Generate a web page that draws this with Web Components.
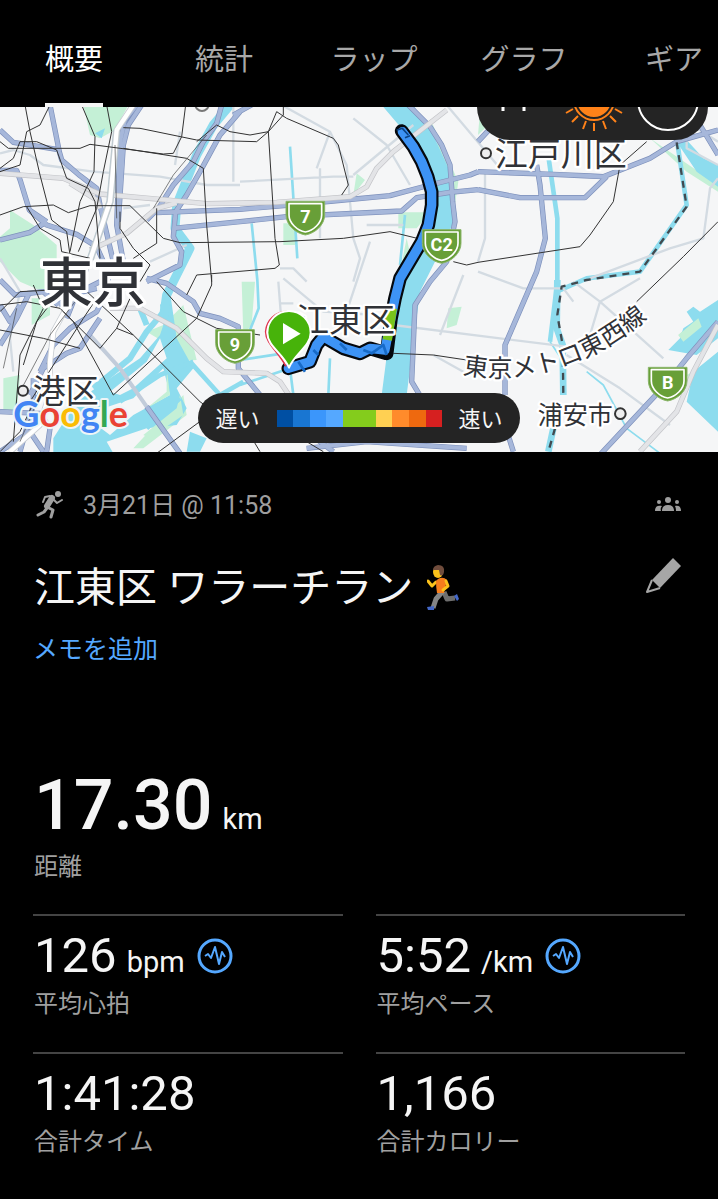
<!DOCTYPE html>
<html lang="ja">
  <head>
    <meta charset="utf-8">
    <meta name="viewport" content="width=device-width, initial-scale=1">
    <title>江東区 ワラーチラン</title>
    <style>
      body {
        margin: 0;
        background: #000;
        color: #f5f5f5;
        font-family: Roboto, "Noto Sans CJK JP", sans-serif;
      }
    </style>
  </head>
  <body>
    <activity-page>
      <tab-bar slot="tabs">
        <tab-item selected>概要</tab-item>
        <tab-item>統計</tab-item>
        <tab-item>ラップ</tab-item>
        <tab-item>グラフ</tab-item>
        <tab-item>ギア</tab-item>
      </tab-bar>
      <route-map slot="map">
        <weather-chip slot="weather"></weather-chip>
        <pace-legend slot="legend"></pace-legend>
      </route-map>
      <activity-header>
        <span slot="date">3月21日 @ 11:58</span>
        <span slot="name">江東区 ワラーチラン</span>
        <span slot="memo">メモを追加</span>
      </activity-header>
      <activity-stats>
        <stat-item large unit="km" label="距離">17.30</stat-item>
        <stat-item chart unit="bpm" label="平均心拍">126</stat-item>
        <stat-item chart unit="/km" label="平均ペース">5:52</stat-item>
        <stat-item label="合計タイム">1:41:28</stat-item>
        <stat-item label="合計カロリー">1,166</stat-item>
      </activity-stats>
    </activity-page>

    <template id="activity-page">
      <style>
        :host { display: block; }
        main { padding: 0 33px 40px; }
      </style>
      <slot name="tabs"></slot>
      <slot name="map"></slot>
      <main><slot></slot></main>
    </template>

    <template id="tab-bar">
      <style>
        :host { display: block; overflow: hidden; }
        nav { display: flex; height: 107px; margin-left: -1px; }
      </style>
      <nav><slot></slot></nav>
    </template>

    <template id="tab-item">
      <style>
        :host { display: flex; flex: 0 0 150px; justify-content: center; }
        button {
          box-sizing: border-box;
          height: 100%;
          padding: 17px 0 0;
          border: 0;
          border-bottom: 4px solid transparent;
          background: none;
          color: #a8a8a8;
          font: inherit;
          font-size: 29px;
          line-height: 40px;
        }
        :host([selected]) button { color: #fff; border-color: #f5f5f5; }
      </style>
      <button type="button"><slot></slot></button>
    </template>

    <template id="route-map">
      <style>
        :host { display: block; position: relative; overflow: hidden; background: #f5f6f7; }
        svg { display: block; width: 100%; height: auto; }
        path { fill: none; stroke-linejoin: round; }
        .park path { fill: #c4f0d6; }
        .water path { fill: #8ddcee; }
        .river path { stroke: #8ddcee; }
        .minor path { stroke: #d3dbe2; stroke-width: 7; }
        .case { stroke: #7d90bb; stroke-width: 16; }
        .road { stroke: #a6b7da; stroke-width: 12; }
        .greycase { stroke: #c3c4c8; stroke-width: 16; }
        .grey { stroke: #e3e4e7; stroke-width: 12; }
        .rail path { stroke: #333; stroke-width: 3; }
        .border path { stroke: #414a50; stroke-width: 7; stroke-dasharray: 21 18; }
        .place {
          fill: #303237;
          stroke: #fff;
          stroke-width: 14;
          stroke-linejoin: round;
          paint-order: stroke;
          font-family: "Noto Sans CJK JP", sans-serif;
          font-size: 99px;
        }
        .shield text { fill: #fff; font: 700 54px Roboto, sans-serif; text-anchor: middle; }
        .google { font: 700 108px Lato, sans-serif; stroke: #eef5f7; stroke-width: 12; paint-order: stroke; stroke-linejoin: round; }
        .weather { position: absolute; top: 0; right: 10px; }
        .legend { position: absolute; right: 0; bottom: 9px; left: 0; display: flex; justify-content: center; }
      </style>
      <svg viewBox="0 6 2154 1035" role="img" aria-label="ルート">
        <defs>
          <g id="shield">
            <path d="M-58-46H58V-5C58 24 30 50 0 55C-30 50-58 24-58-5Z" style="fill:#689f38;stroke:#8ab56a;stroke-width:3"/>
            <path d="M-49-39H49V-5C49 19 24 42 0 46C-24 42-49 19-49-5Z" style="stroke:#fff;stroke-width:5"/>
          </g>
          <!-- roads are drawn twice: a dark casing, then the fill -->
          <g id="roads">
            <path d="M0 75L40 112L170 133M150 0L178 140L185 165L240 212L290 250L300 300L340 470M0 196H50L62 230L88 315L140 360L230 388L290 425L310 470M0 405L90 382L140 350M88 315L140 350"/>
            <path d="M410 0L375 45L360 110L350 360L370 470M425 0L385 60L370 120L355 350"/>
            <path d="M720 20L660 90L600 200L560 270L527 320L520 395L545 440L540 480L440 530M665 0L650 55L610 110L580 170L520 240L475 310L440 345"/>
            <path d="M0 525L45 570L130 560L175 600M0 720L50 640L90 560M0 600L30 650L60 600M175 600L210 570L250 560L290 550M120 800L160 720L210 670L290 620L320 560L325 520M90 870L130 790L200 745L240 730L300 640M60 1040L100 900L100 820M0 920L120 925L150 970L140 1040L120 1060M0 1040L90 980L130 1040M240 560L300 530M260 490L200 640"/>
            <path d="M440 520L500 535L580 590L600 625L660 640L715 665V790L780 870M440 905L540 1045"/>
            <path d="M470 323L720 313L870 300L1000 288L1170 272L1290 240L1410 210L1434 200M520 370L720 350L860 335L1205 318L1250 278L1350 262L1434 254"/>
            <path d="M700 30L790 -20M1225 0L1290 65L1325 120L1350 180L1358 290L1365 350L1340 470L1290 530L1245 600L1235 830L1265 880"/>
            <path d="M1434 200L1660 208L1770 213L1810 215L1950 160L2030 110L2154 75M1434 254L1560 278H1755L1820 215M1610 180L1620 240L1636 400L1610 500L1515 720V870M2100 60L2154 150M1434 110L1490 50"/>
            <path d="M1790 1060L2000 835L2060 760L2154 650M1515 960L1540 1040"/>
            <path d="M880 950L960 1010L1000 1040M920 1030L1100 1010L1400 1030"/>
          </g>
          <g id="express">
            <path d="M0 205L190 220L300 267L480 283L620 296L830 292L1050 275L1100 245L1130 190L1180 140L1340 15"/>
            <path d="M210 235L290 285L300 310M270 435L380 385L470 310L530 294"/>
            <path d="M330 610H420L530 670L620 760L670 800L800 805L840 830L870 875"/>
            <path d="M2154 660L2080 800L2030 920L1920 1040"/>
          </g>
        </defs>
        <g class="park">
          <path d="M250 0H385L345 75L300 100L270 90ZM30 315L100 360L170 420V470L200 480L130 560L60 530L0 470V395L30 370ZM95 580H150V630L95 660ZM10 820L60 810L50 920H10ZM550 600L490 660L520 770L590 765ZM440 680L490 660V710ZM550 870L560 930L430 1030L400 1030Z"/>
          <path d="M850 355H885V420H850ZM1070 205L1095 225L1060 270ZM1195 322H1290L1250 370H1195ZM1190 1000L1240 490L1220 400L1200 500ZM725 530H765L755 660L730 690ZM1345 610L1385 605L1370 660L1340 670ZM1290 40L1375 230L1360 330L1340 360L1310 100Z"/>
          <path d="M1950 100L2154 240L2154 260L2060 200ZM2035 690L2100 630L2110 660L2050 710ZM1440 20L1465 60L1434 90ZM2060 810L2154 760V900Z"/>
        </g>
        <g class="water">
          <path d="M285 85L315 70L305 100ZM510 560L530 700L580 790L530 850L560 910L530 960L440 970L320 1010L340 1045H160V1000L230 890L300 840L420 760L480 690L490 660L480 600Z"/>
          <path d="M570 980L620 1000L600 1040H560ZM1145 0H1240L1300 90L1350 200L1370 330L1320 440L1260 560L1220 870L1145 870L1180 600L1260 440L1300 300L1290 200L1230 100Z"/>
          <path d="M2020 95L2090 200L2154 245V180L2110 160L2060 105ZM2005 735L2040 700L2050 670L2080 650L2060 620L2080 605L2100 620L2154 585V700L2090 750ZM2080 800L2154 740V980L2060 890Z"/>
        </g>
        <!-- land between the canals -->
        <g style="stroke:none">
          <path d="M480 700L500 760L400 850L360 870L330 860L440 770ZM490 790L510 870L400 930L330 990L250 930L400 880Z" style="fill:#f5f6f7"/>
        </g>
        <g class="park"><path d="M2035 690L2095 640L2105 665L2050 710ZM500 790L510 870L440 910L500 860ZM540 870L550 930L450 1000L430 990L530 910Z"/></g>
        <g class="river">
          <path stroke-width="27" d="M690 0L640 60L590 150L530 300L525 370L570 430L525 520L500 570L490 640"/>
          <path stroke-width="18" d="M280 850L390 760L440 680L500 610M400 560L440 660"/>
          <path stroke-width="14" d="M360 890L480 810L580 770M570 770L660 870L730 830M440 970L540 880"/>
          <path stroke-width="8" d="M870 125L892 460M755 355L772 525L776 610L740 700M1215 330L1200 480M720 765L850 745M720 840L870 790L880 870M990 760L985 870"/>
          <path stroke-width="14" d="M1646 160L1672 340V530L1650 710M1670 560L1760 520L1920 500L2060 300L2030 100"/>
          <path stroke-width="20" d="M1672 525L1670 670L1688 720L1690 870M1660 970L1645 1040"/>
          <path stroke-width="5" d="M1650 710L1690 770M1760 800L1810 840L1880 970L1980 1045"/>
        </g>
        <g class="minor">
          <path d="M0 145L40 135L90 150L130 180L280 200L480 215L620 240H720M700 0V230M540 80L525 180M370 310L450 300M720 230L1000 215H1060M845 0L990 80L1040 180L1060 400L1080 460L1060 530M960 190V400M1060 210L1240 60M990 80L950 190M1060 40L1160 120L1230 240M1100 360H1210M0 460L60 560L30 700L40 800M450 470L560 420"/>
          <path d="M840 490L880 490L920 530M835 530L845 660M840 595H880M1110 410L1060 560L1030 650M850 520L970 620L1130 630M1180 660L1700 725M1390 510L1320 690M1300 750L1390 800M1434 500L1570 550H1690L1720 590M1770 520L2010 430L2110 400L2130 250L2154 220M1720 530L1800 590L1990 760M1700 750L1860 850L2010 960M1800 590L1770 690M1800 590L1920 520M1980 0L2154 110M2060 50V130L2154 180M1455 200V400L1434 470M1340 0L1500 190"/>
          <path d="M270 690L360 790L440 905" style="stroke:#c2ccda;stroke-width:12"/>
        </g>
        <use class="case" href="#roads"/>
        <use class="road" href="#roads"/>
        <use class="greycase" href="#express"/>
        <use class="grey" href="#express"/>
        <path d="M350 75L330 290L270 465" style="stroke:#b7c8cf;stroke-width:22"/>
        <path d="M400 0L350 75L330 290L270 465L210 590L160 680L150 770V860L120 960L30 1040" style="stroke:#c9ced3;stroke-width:18"/>
        <path d="M400 0L350 75L330 290L270 465L210 590L160 680L150 770V860L120 960L30 1040" style="stroke:#fff;stroke-width:13"/>
        <g class="rail">
          <path d="M75 0L90 80L120 210L155 345L200 380L210 450M0 110L25 130H240L270 118L490 147L520 145L545 95L557 0M0 190L40 160L60 110H110L170 135L200 220L265 250L285 290L300 460M150 0L120 60L80 80L60 180L0 200M245 0L285 95L282 200L240 290L210 440M335 80L310 200L290 310L235 440M320 0L335 80M370 68L420 70L590 105L770 110L805 80M0 330L70 305L160 300L205 323L270 302H390L490 400L540 413L840 410L1030 400L1170 380L1260 402M80 305L120 370L180 405L185 440L270 460M370 130L560 160L610 190L620 360L635 530M470 310V415L400 460M360 320V370L400 430L450 480L420 530M590 110L650 60L690 80L750 90L805 80L850 30V0M805 80L830 20L860 40L1000 100L1015 120L1045 240L1025 270M805 80L825 400L838 480L825 490L590 510L560 570"/>
          <path d="M0 600L80 590L180 610L220 650L340 870L590 640L635 540V510M0 675L130 700L240 730M0 620L60 560L250 550L400 690L600 890L640 920L470 1045M100 540L130 610L60 750L40 1010M190 620L300 730L350 670L390 580M350 670L400 690M470 530L550 620L650 670L780 690M0 1040L60 980L130 830M330 520L250 640L90 890M210 520L110 650L70 780"/>
          <path d="M1180 745L1300 750L1400 765M1360 470L1400 480L1434 472L1740 425L1770 390L1840 290L1860 180L1940 110M1910 590L2050 455L2154 350M2154 0L2180 60M920 1010L970 1040M720 940L780 1040"/>
        </g>
        <g class="rail" style="opacity:.6"><path d="M345 120L350 340M50 610L10 790M240 570L150 690L60 860M620 90L520 210L460 310M130 845L60 1010"/></g>
        <g class="border"><path d="M2030 112L2060 305L1920 500L1760 525L1685 545L1672 630L1688 720L1690 870M1665 970L1645 1040"/></g>
        <circle cx="606" cy="-2" r="20" fill="#f4f4f4" stroke="#777" stroke-width="6"/>

        <path d="M1205 78L1240 125L1265 170L1283 215L1295 260L1295 300L1285 360L1265 410L1200 520L1185 580L1173 640L1160 745L1110 730L1080 745L1030 730L970 695L950 720L930 770L865 790" style="stroke:#05080d;stroke-width:41;stroke-linecap:round"/>
        <path d="M1207 80L1240 125L1265 170L1283 215L1295 260L1295 300L1285 360L1265 410L1200 520L1185 580L1173 640L1155 735L1110 730L1080 745L1030 730L970 695L950 720L930 770L865 790" style="stroke:#3d93f5;stroke-width:28;stroke-linecap:round"/>
        <path d="M1177 610L1162 705" style="stroke:#78c51c;stroke-width:28"/>
        <path d="M1090 735L1115 745L1150 720L1160 750M1020 715L1040 735M895 770L915 800M940 735L955 750" style="stroke:#176ac7;stroke-width:8"/>
        <path d="M1190 76L1207 70L1225 90M1215 98L1230 92" style="stroke:#0c4383;stroke-width:5"/>

        <g class="shield">
          <use href="#shield" x="916" y="335"/><text x="916" y="354">7</text>
          <use href="#shield" x="1325" y="420"/><text x="1325" y="439">C2</text>
          <use href="#shield" x="705" y="720"/><text x="705" y="739">9</text>
          <use href="#shield" x="2003" y="833"/><text x="2003" y="852">B</text>
        </g>
        <g class="place">
          <text x="119" y="592" style="font-size:159px;font-weight:500;stroke-width:18">東京</text>
          <text x="1484" y="182">江戸川区</text>
          <text x="888" y="682">江東区</text>
          <text x="98" y="894">港区</text>
          <text x="1613" y="957" style="font-size:75px">浦安市</text>
          <path id="metro" d="M1388 806C1560 840 1760 800 1960 625" style="stroke:none"/>
          <text style="font-size:75px"><textPath href="#metro">東京メトロ東西線</textPath></text>
        </g>
        <g fill="#eee" stroke="#333" stroke-width="6">
          <circle cx="1458" cy="145" r="15"/>
          <circle cx="69" cy="857" r="15"/>
          <circle cx="1861" cy="926" r="16"/>
        </g>
        <text class="google" x="40" y="965"><tspan fill="#4285f4">G</tspan><tspan fill="#ea4335">o</tspan><tspan fill="#fbbc05">o</tspan><tspan fill="#4285f4">g</tspan><tspan fill="#34a853">l</tspan><tspan fill="#ea4335">e</tspan></text>

        <path d="M858 784C835 740 797 715 797 680A64 64 0 0 1 861 620" style="fill:#fff;stroke:#e0354f;stroke-width:5"/>
        <path d="M867 788C850 745 802 725 802 683A65 65 0 0 1 932 683C932 725 884 745 867 788Z" style="fill:#47b30a;stroke:#fff;stroke-width:6"/>
        <path d="M849 654L902 686L849 718Z" style="fill:#fff"/>
      </svg>
      <div class="weather"><slot name="weather"></slot></div>
      <div class="legend"><slot name="legend"></slot></div>
    </template>

    <template id="weather-chip">
      <style>
        :host { display: block; width: 231px; height: 33px; border-radius: 0 0 33px 33px; background: #242424; }
        svg { display: block; }
      </style>
      <svg width="231" height="33" viewBox="0 0 231 33" fill="none">
        <path d="M26 0V4M47 0V4" stroke="#fff" stroke-width="3"/>
        <circle cx="117" cy="-7" r="21" fill="#ff8219"/>
        <circle cx="117" cy="-7" r="18" stroke="#242424" stroke-width="2"/>
        <path d="M117 16V24M126 14L129 22M109 14L106 22M133 9L139 15M101 9L95 15M138 2L145 6M96 2L89 6" stroke="#ff8219" stroke-width="2"/>
        <circle cx="191" cy="-7" r="30" stroke="#fff" stroke-width="2"/>
      </svg>
    </template>

    <template id="pace-legend">
      <style>
        :host { display: block; }
        div {
          display: flex;
          align-items: center;
          gap: 17px;
          height: 50px;
          padding: 0 17px;
          border-radius: 25px;
          background: #242424;
          font-size: 22px;
        }
        span { padding-top: 3px; line-height: 32px; }
        ul { display: flex; margin: 0; padding: 0; list-style: none; }
        li { width: 33px; height: 17px; }
      </style>
      <div>
        <span>遅い</span>
        <ul>
          <li style="background: linear-gradient(90deg, #004fa3 50%, #1976d2 50%)"></li>
          <li style="background: linear-gradient(90deg, #3b96fb 50%, #55a8ff 50%)"></li>
          <li style="background: #84cc1c"></li>
          <li style="background: linear-gradient(90deg, #ffd052 50%, #ff8b2b 50%)"></li>
          <li style="background: linear-gradient(90deg, #ee690f 50%, #d62020 50%)"></li>
        </ul>
        <span>速い</span>
      </div>
    </template>

    <template id="activity-header">
      <style>
        :host { display: block; padding-top: 34px; }
        .row { display: flex; align-items: center; justify-content: space-between; }
        .date { display: flex; align-items: center; gap: 17px; color: #9e9e9e; font-size: 25px; line-height: 40px; }
        h1 { display: flex; align-items: center; gap: 14px; margin: 0; padding-left: 1px; font-size: 41px; font-weight: 400; line-height: 60px; }
        .title { align-items: flex-start; margin-top: 32px; }
        button { display: block; padding: 0; margin: 0 3px 0 0; border: 0; background: none; }
        svg { display: block; }
        .group { margin-right: 3px; }
        a { display: inline-block; margin-top: 12px; color: #55a8ff; font-size: 25px; line-height: 40px; text-decoration: none; }
      </style>
      <div class="row">
        <div class="date">
          <svg width="33" height="30" viewBox="0 0 33 30" fill="none" stroke="#a0a0a0" stroke-linecap="round" stroke-linejoin="round">
            <circle cx="25" cy="3" r="3" fill="#a0a0a0" stroke="none"/>
            <path d="M19 7L14 15" stroke-width="6"/>
            <path d="M17 5L12 6L10 11M20 8L24 12L29 9" stroke-width="2"/>
            <path d="M14 16L20 19L18 26M14 17L11 21L5 24" stroke-width="3"/>
          </svg>
          <slot name="date"></slot>
        </div>
        <svg class="group" width="27" height="18" viewBox="0 0 27 18" fill="#9e9e9e">
          <circle cx="13" cy="3" r="3"/><circle cx="4" cy="5" r="2"/><circle cx="22" cy="5" r="2"/>
          <path d="M7 14C7 10 9 8 13 8S19 10 19 14ZM0 14C0 10 2 8 7 9Q5 11 6 14ZM26 14C26 10 24 8 20 9Q21 11 21 14Z"/>
        </svg>
      </div>
      <div class="row title">
        <h1>
          <slot name="name"></slot>
          <svg width="34" height="46" viewBox="0 0 34 46" role="img" aria-label="ランナー">
            <path d="M17 27L20 34L28 33" fill="none" stroke="#6e6e6e" stroke-width="5" stroke-linejoin="round"/>
            <path d="M16 26L9 34L6 43" fill="none" stroke="#858585" stroke-width="5" stroke-linejoin="round"/>
            <path d="M27 31L30 29L32 34L30 36ZM0 42L7 41V45H1Z" fill="#4468c8"/>
            <path d="M9 17L5 21L1 16" fill="none" stroke="#fcc21b" stroke-width="3" stroke-linejoin="round" stroke-linecap="round"/>
            <path d="M11 14Q16 11 20 15L17 28H10Q9 22 9 16Z" fill="#f77e1c"/>
            <path d="M19 16L21 21L16 25" fill="none" stroke="#fcc21b" stroke-width="3" stroke-linejoin="round" stroke-linecap="round"/>
            <ellipse cx="11" cy="7" rx="5" ry="6" fill="#fcc21b"/>
            <path d="M6 5Q6 1 11 0Q18 0 17 7Q16 12 13 10L12 5Z" fill="#704c3c"/>
          </svg>
        </h1>
        <button type="button" aria-label="編集">
          <svg width="36" height="36" viewBox="0 0 36 36">
            <path d="M27 0L35 8L14 30L6 22Z" fill="#a6a6a6"/>
            <path d="M6 22L1 34L14 30" fill="none" stroke="#a6a6a6" stroke-width="2" stroke-linejoin="round"/>
          </svg>
        </button>
      </div>
      <a href="#memo"><slot name="memo"></slot></a>
    </template>

    <template id="activity-stats">
      <style>
        :host { display: grid; grid-template-columns: 1fr 1fr; column-gap: 33px; margin-top: 97px; }
      </style>
      <slot></slot>
    </template>

    <template id="stat-item">
      <style>
        :host { display: block; box-sizing: border-box; height: 138px; border-top: 2px solid #444; }
        :host([large]) { grid-column: 1 / -1; height: 147px; border: 0; }
        .value { display: flex; align-items: baseline; gap: 10px; height: 60px; padding: 10px 0 0 1px; font-size: 49px; line-height: 60px; }
        :host([large]) .value { height: 76px; padding-top: 0; font-size: 70px; font-weight: 500; line-height: 76px; }
        .unit { font-size: 29px; font-weight: 400; }
        .label { padding-left: 1px; color: #a0a0a0; font-size: 24px; line-height: 36px; }
        :host([large]) .label { padding-top: 6px; }
        button { align-self: center; padding: 0; margin-left: 2px; border: 0; background: none; display: none; }
        :host([chart]) button { display: block; }
        .unit:empty { display: none; }
        svg { display: block; }
      </style>
      <div class="value">
        <slot></slot>
        <span class="unit"></span>
        <button type="button" aria-label="グラフを表示">
          <svg width="36" height="36" viewBox="0 0 36 36" fill="none" stroke="#55a8ff" stroke-linejoin="round">
            <circle cx="18" cy="18" r="16" stroke-width="3"/>
            <path d="M8 18L11 16L14 20L18 9L22 26L25 14L28 19" stroke-width="2"/>
          </svg>
        </button>
      </div>
      <div class="label"></div>
    </template>

    <script>
      class TemplateElement extends HTMLElement {
        constructor() {
          super();
          const template = document.getElementById(this.localName);
          this.attachShadow({mode: 'open'}).appendChild(template.content.cloneNode(true));
        }
      }

      class StatItem extends TemplateElement {
        connectedCallback() {
          this.shadowRoot.querySelector('.unit').textContent = this.getAttribute('unit') || '';
          this.shadowRoot.querySelector('.label').textContent = this.getAttribute('label');
        }
      }

      class TabItem extends TemplateElement {
        connectedCallback() {
          this.shadowRoot.querySelector('button').onclick = () => {
            [...this.parentElement.children].map(x => x.toggleAttribute('selected', x === this));
          };
        }
      }

      customElements.define('activity-page', class extends TemplateElement {});
      customElements.define('tab-bar', class extends TemplateElement {});
      customElements.define('tab-item', TabItem);
      customElements.define('route-map', class extends TemplateElement {});
      customElements.define('weather-chip', class extends TemplateElement {});
      customElements.define('pace-legend', class extends TemplateElement {});
      customElements.define('activity-header', class extends TemplateElement {});
      customElements.define('activity-stats', class extends TemplateElement {});
      customElements.define('stat-item', StatItem);
    </script>
  </body>
</html>
